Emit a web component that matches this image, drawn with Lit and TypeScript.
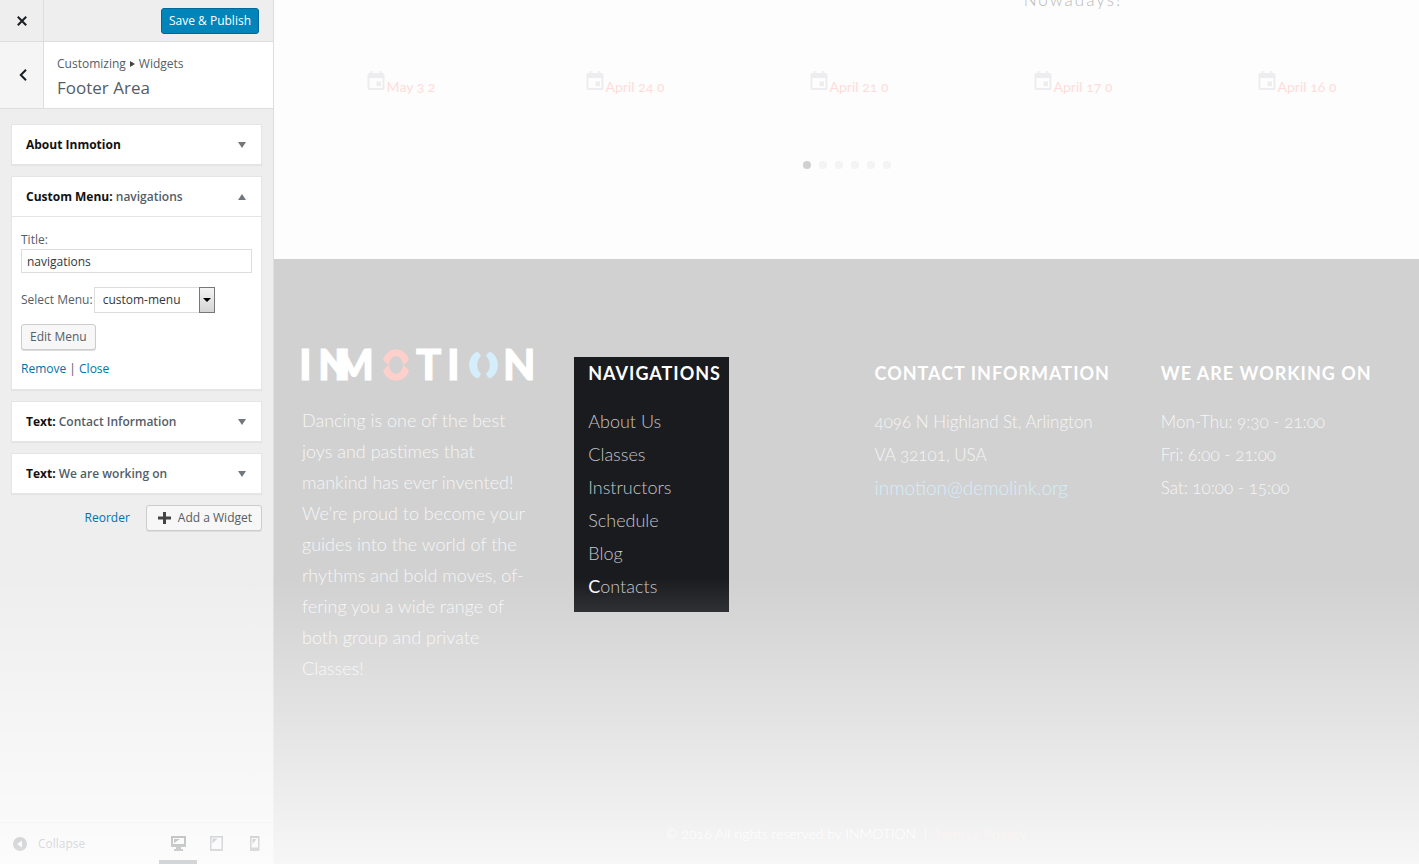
import { LitElement, html, css, svg } from "lit";
import { customElement, state } from "lit/decorators.js";
import { classMap } from "lit/directives/class-map.js";

const POSTS = [
  { title: "", date: "May 3", comments: 2 },
  { title: "", date: "April 24", comments: 0 },
  { title: "", date: "April 21", comments: 0 },
  { title: "Nowadays!", date: "April 17", comments: 0 },
  { title: "", date: "April 16", comments: 0 },
];

const MENU = ["About Us", "Classes", "Instructors", "Schedule", "Blog", "Contacts"];

const DEVICES = [
  {
    name: "Desktop",
    icon: svg`<path fill-rule="evenodd" d="M1 1h15v11h-5v2h2v2H4v-2h2v-2H1zM3 3v6h11V3z"/><path d="M4 4h6L4 8z"/>`,
  },
  {
    name: "Tablet",
    icon: svg`<path fill-rule="evenodd" d="M2 1h13v15H2zM3.500 2.500v11.500h10V2.500z"/><path d="M4.500 3.500h5l-5 5z"/>`,
  },
  {
    name: "Phone",
    icon: svg`<path fill-rule="evenodd" d="M4 1h9.500v15H4zM5.500 3v9.500h6.500V3z"/><path d="M6.500 4h4l-4 5z"/>`,
  },
];

@customElement("customizer-panel")
class CustomizerPanel extends LitElement {
  @state() private device = "Desktop";

  static styles = css`
    :host {
      display: flex;
      flex-direction: column;
      box-sizing: border-box;
      width: 274px;
      flex: none;
      border-right: 1px solid #ddd;
      background: #eee;
      color: #555d66;
      font: 12px/20px "Open Sans", "Noto Sans", sans-serif;
    }
    button,
    input,
    select {
      font: inherit;
      color: inherit;
      box-sizing: border-box;
      margin: 0;
    }
    a {
      color: #0073aa;
      text-decoration: none;
    }
    .bar {
      display: flex;
      align-items: stretch;
      justify-content: space-between;
      height: 41px;
      border-bottom: 1px solid #ddd;
    }
    .close,
    .back {
      width: 44px;
      display: grid;
      place-items: center;
      padding: 0;
      border: 0;
      border-right: 1px solid #ddd;
      background: #eee;
    }
    .back {
      background: #f5f5f5;
      padding-left: 3px;
    }
    .publish {
      align-self: center;
      height: 26px;
      margin-right: 14px;
      padding: 1px 7px 0;
      border: 1px solid #006799;
      border-radius: 3px;
      background: #0085ba;
      color: #fff;
    }
    .heading {
      display: flex;
      height: 66px;
      background: #fff;
      border-bottom: 1px solid #ddd;
    }
    .where {
      padding: 12px 13px;
    }
    .crumb,
    .area {
      margin: 0;
      font-weight: 400;
    }
    .crumb {
      display: flex;
      align-items: center;
      gap: 4px;
      line-height: 20px;
    }
    .area {
      font-size: 17px;
      line-height: 28px;
    }
    .widgets {
      display: flex;
      flex-direction: column;
      gap: 11px;
      padding: 15px 11px 11px;
    }
    .card {
      background: #fff;
      border: 1px solid #e5e5e5;
      box-shadow: 0 1px 1px rgba(0, 0, 0, 0.04);
    }
    .head {
      display: flex;
      align-items: center;
      justify-content: space-between;
      width: 100%;
      height: 39px;
      padding: 0 15px 0 14px;
      border: 0;
      background: none;
      text-align: left;
      font-weight: 600;
    }
    .kind {
      color: #111;
      font-weight: 700;
    }
    .tri {
      fill: #72777c;
    }
    .body {
      display: flex;
      flex-direction: column;
      align-items: flex-start;
      border-top: 1px solid #e5e5e5;
      padding: 14px 9px 10px;
    }
    .label {
      line-height: 18px;
    }
    .text {
      width: 100%;
      height: 24px;
      padding: 0 5px;
      border: 1px solid #ddd;
      color: #32373c;
      background: #fff;
    }
    .row {
      display: flex;
      align-items: center;
      gap: 1px;
      margin: 14px 0 11px;
    }
    .pick {
      position: relative;
      display: flex;
    }
    .select {
      appearance: none;
      width: 121px;
      height: 26px;
      padding: 0 20px 0 8px;
      border: 1px solid #ddd;
      border-radius: 0;
      background: #fff;
      color: #32373c;
    }
    .drop {
      position: absolute;
      inset: 0 0 0 auto;
      width: 16px;
      box-sizing: border-box;
      display: grid;
      place-items: center;
      border: 1px solid #777;
      background: linear-gradient(#f4f4f4, #d4d4d4);
      pointer-events: none;
    }
    .btn {
      display: flex;
      align-items: center;
      gap: 7px;
      height: 26px;
      padding: 0 8px;
      border: 1px solid #ccc;
      border-radius: 3px;
      background: #f7f7f7;
      box-shadow: 0 1px 0 #ddd;
    }
    .add {
      padding: 0 9px 0 11px;
    }
    .links {
      margin-top: 9px;
    }
    .actions {
      display: flex;
      justify-content: flex-end;
      align-items: center;
      gap: 16px;
      padding: 0 11px;
    }
    .foot {
      display: flex;
      align-items: stretch;
      justify-content: space-between;
      height: 41px;
      margin-top: auto;
      border-top: 1px solid #ddd;
    }
    .collapse {
      display: flex;
      align-items: center;
      gap: 10px;
      padding: 0 12px;
      border: 0;
      background: none;
      color: #555d66;
    }
    .devices {
      display: flex;
    }
    .device {
      width: 38px;
      padding: 4px 0 0;
      border: 0;
      border-bottom: 4px solid transparent;
      background: none;
      fill: #555d66;
    }
    .device.on {
      border-bottom-color: #191e23;
      fill: #191e23;
    }
    svg {
      display: block;
    }
    .device svg {
      margin: auto;
    }
  `;

  private card(kind: string, name: string, open = false, body: unknown = "") {
    return html`<section class="card">
      <button class="head" aria-expanded=${open}>
        <span><span class="kind">${kind}</span> ${name}</span>
        <svg class="tri" width="8" height="6">
          <path d=${open ? "M0 6h8L4 0z" : "M0 0h8L4 6z"} />
        </svg>
      </button>
      ${body}
    </section>`;
  }

  render() {
    return html`
      <div class="bar">
        <button class="close" aria-label="Close">
          <svg width="10" height="10" stroke="#191e23" stroke-width="2"><path d="M.8.800l8.400 8.400M9.200.800L.8 9.200" /></svg>
        </button>
        <button class="publish">Save &amp; Publish</button>
      </div>
      <div class="heading">
        <button class="back" aria-label="Back">
          <svg width="8" height="12" fill="none" stroke="#191e23" stroke-width="2"><path d="M7 .8L1.800 6 7 11.200" /></svg>
        </button>
        <div class="where">
          <p class="crumb">
            Customizing
            <svg width="5" height="6" fill="#444"><path d="M0 0l5 3-5 3z" /></svg>
            Widgets
          </p>
          <h1 class="area">Footer Area</h1>
        </div>
      </div>
      <div class="widgets">
        ${this.card("About Inmotion", "")}
        ${this.card(
          "Custom Menu:",
          "navigations",
          true,
          html`<div class="body">
            <label class="label" for="title">Title:</label>
            <input class="text" id="title" type="text" value="navigations" />
            <div class="row">
              <label for="menu">Select Menu:</label>
              <span class="pick">
                <select class="select" id="menu">
                  <option>custom-menu</option>
                </select>
                <span class="drop"><svg width="8" height="4"><path d="M0 0h8L4 4z" /></svg></span>
              </span>
            </div>
            <button class="btn">Edit Menu</button>
            <div class="links"><a href="#">Remove</a> | <a href="#">Close</a></div>
          </div>`
        )}
        ${this.card("Text:", "Contact Information")} ${this.card("Text:", "We are working on")}
      </div>
      <div class="actions">
        <a href="#">Reorder</a>
        <button class="btn add">
          <svg width="13" height="12" fill="#444"><path d="M5 0h3v4.500h5v3H8V12H5V7.500H0v-3h5z" /></svg>
          Add a Widget
        </button>
      </div>
      <div class="foot">
        <button class="collapse">
          <svg width="16" height="16"><circle cx="8" cy="8" r="7" fill="#555d66" /><path d="M10 4.500v7L5 8z" fill="#eee" /></svg>
          Collapse
        </button>
        <div class="devices">
          ${DEVICES.map(
            (d) => html`<button
              class=${classMap({ device: true, on: d.name === this.device })}
              aria-label=${d.name}
              @click=${() => (this.device = d.name)}
            >
              <svg width="17" height="17">${d.icon}</svg>
            </button>`
          )}
        </div>
      </div>
    `;
  }
}

@customElement("site-preview")
class SitePreview extends LitElement {
  static styles = css`
    :host {
      display: flex;
      flex-direction: column;
      flex: 1;
      min-width: 0;
      overflow: hidden;
      background: #fdfdfd;
      font: 300 17px/33px Lato, "Open Sans", sans-serif;
      font-variant-numeric: oldstyle-nums;
    }
    a {
      color: inherit;
      text-decoration: none;
    }
    .posts {
      display: grid;
      grid-template-columns: repeat(5, 1fr);
      padding: 0 10px 0 15px;
    }
    .post {
      text-align: center;
    }
    .name {
      height: 33px;
      margin: -17px 0 54px;
      font-size: 17px;
      font-weight: 300;
      letter-spacing: 2px;
      color: #bbb;
    }
    .meta {
      display: flex;
      justify-content: center;
      align-items: flex-start;
      gap: 2px;
      font-size: 14px;
      font-weight: 400;
      color: #ffdcda;
    }
    .cal {
      fill: #ededef;
      padding-top: 1px;
    }
    .dots {
      display: flex;
      justify-content: center;
      gap: 8px;
      padding: 58px 0 90px;
    }
    .dot {
      width: 8px;
      height: 8px;
      padding: 0;
      border: 0;
      border-radius: 50%;
      background: #f4f4f4;
    }
    .dot.on {
      background: #d0d0d0;
    }
    .footer {
      flex: 1;
      display: flex;
      flex-direction: column;
      justify-content: space-between;
      background: #d1d1d1;
      color: #f6f6f6;
    }
    .cols {
      display: grid;
      grid-template-columns: repeat(4, 1fr);
      align-items: start;
      padding-top: 90px;
    }
    .about {
      padding-left: 28px;
    }
    .blurb {
      margin: 21px 0 0;
      font-size: 18px;
      line-height: 31px;
      white-space: nowrap;
    }
    .info {
      margin: 8px 0 0 14px;
      padding: 0 8px 9px 14px;
      justify-self: start;
    }
    .nav {
      background: #1a1b1f;
      color: #c4c6ca;
      font-size: 18px;
    }
    .title {
      margin: 0 0 16px;
      font-size: 18px;
      line-height: 32px;
      font-weight: 700;
      letter-spacing: 1px;
      color: #fff;
      white-space: nowrap;
    }
    .list {
      list-style: none;
      margin: 0;
      padding: 0;
    }
    .first {
      display: block;
    }
    .first::first-letter {
      font-weight: 400;
      color: #fff;
    }
    .mail {
      font-size: 19px;
      color: #d5eefb;
    }
    .legal {
      margin: 0;
      padding-bottom: 14px;
      text-align: center;
      font-size: 14px;
      line-height: 32px;
      color: #fff;
    }
    .terms {
      color: #ffd9d6;
    }
    .mark {
      display: block;
      overflow: visible;
      font: 900 42px Lato, sans-serif;
      fill: #fff;
    }
    .letters {
      stroke: #fff;
      stroke-width: 1px;
    }
  `;

  render() {
    return html`
      <section>
        <div class="posts">
          ${POSTS.map(
            (p) => html`<article class="post">
              <h3 class="name">${p.title}</h3>
              <a class="meta" href="#">
                <svg class="cal" width="18" height="20">
                  <path fill-rule="evenodd" d="M3.500 0h2v2h7V0h2v2h1a2 2 0 0 1 2 2v13a2 2 0 0 1-2 2h-13a2 2 0 0 1-2-2V4a2 2 0 0 1 2-2h1zM2.500 7v10h13V7zM9.500 10.500H14V15H9.500z" />
                </svg>
                <span>${p.date} ${p.comments}</span>
              </a>
            </article>`
          )}
        </div>
        <div class="dots">
          ${[0, 1, 2, 3, 4, 5].map(
            (i) => html`<button class=${classMap({ dot: true, on: i === 0 })} aria-label="Slide ${i + 1}"></button>`
          )}
        </div>
      </section>
      <footer class="footer">
        <div class="cols">
          <div class="about">
            <svg class="mark" width="236" height="35" role="img" aria-label="Inmotion">
              <text class="letters" y="31" x="-3 16 32 114 145 201">INMTIN</text>
              <g fill="#ffcfcc">
                <path d="M81 10.500A13.800 15.500 0 0 1 107 10.500Q105 14 101 16A7 9 0 0 0 87 16Q83 14 81 10.500z" />
                <path d="M81 21.500A13.800 15.500 0 0 0 107 21.500Q105 18 101 16A7 9 0 0 1 87 16Q83 18 81 21.500z" />
              </g>
              <g fill="#d5eefb">
                <path d="M175 2.500A15.500 15.500 0 0 0 175 29.500Q178 28 179 25A9 11 0 0 1 179 7Q178 4 175 2.500z" />
                <path d="M188 2.500A15.500 15.500 0 0 1 188 29.500Q185 28 184 25A9 11 0 0 0 184 7Q185 4 188 2.500z" />
              </g>
            </svg>
            <p class="blurb">
              Dancing is one of the best<br />joys and pastimes that<br />mankind has ever invented!<br />We’re proud to become your<br />guides into the world of the<br />rhythms and bold moves, of-<br />fering you a wide range of<br />both group and private<br />Classes!
            </p>
          </div>
          <nav class="info nav">
            <h2 class="title">NAVIGATIONS</h2>
            <ul class="list">
              ${MENU.map((m) => html`<li><a class=${classMap({ first: m === "Contacts" })} href="#">${m}</a></li>`)}
            </ul>
          </nav>
          <div class="info">
            <h2 class="title">CONTACT INFORMATION</h2>
            4096 N Highland St, Arlington<br />VA 32101, USA<br /><a class="mail" href="#">inmotion@demolink.org</a>
          </div>
          <div class="info">
            <h2 class="title">WE ARE WORKING ON</h2>
            Mon-Thu: 9:30 - 21:00<br />Fri: 6:00 - 21:00<br />Sat: 10:00 - 15:00
          </div>
        </div>
        <p class="legal">© 2016 All rights reserved by INMOTION &nbsp;|&nbsp; <a class="terms" href="#">Terms / Privacy</a></p>
      </footer>
    `;
  }
}

@customElement("app-root")
class AppRoot extends LitElement {
  static styles = css`
    :host {
      position: relative;
      display: flex;
      min-height: 100vh;
    }
    .fade {
      position: absolute;
      inset: auto 0 0;
      height: 286px;
      pointer-events: none;
      background: linear-gradient(rgba(255, 255, 255, 0), rgba(255, 255, 255, 0.82));
    }
  `;

  render() {
    return html`<customizer-panel></customizer-panel><site-preview></site-preview>
      <div class="fade"></div>`;
  }
}
